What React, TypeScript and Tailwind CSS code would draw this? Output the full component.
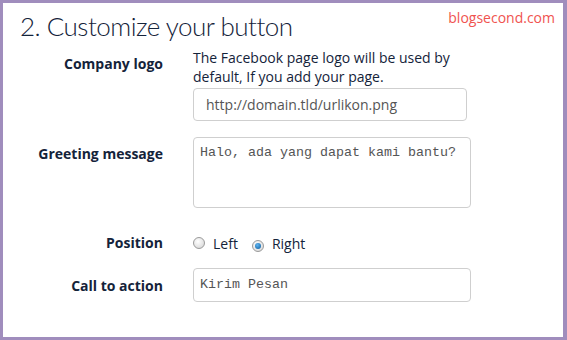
import React from "react";

const Radio = ({ checked }: { checked?: boolean }) => (
  <span className="inline-flex items-center justify-center w-[12px] h-[12px] rounded-full border border-[#9a9a9a] bg-[radial-gradient(circle_at_40%_35%,#ffffff,#d2d2d2)]">
    {checked && (
      <span className="block w-[6px] h-[6px] rounded-full bg-[radial-gradient(circle_at_40%_35%,#5fb4f0,#0a5a9c)]" />
    )}
  </span>
);

export default function App() {
  return (
    <div
      className="w-[567px] h-[340px] bg-white border-t-[3px] border-l-[3px] border-r-[4px] border-b-[3px] border-[#a08dbd] relative text-[#14233a]"
      style={{ fontFamily: "'Open Sans', Lato, sans-serif" }}
    >
      <div
        className="absolute right-[8px] top-[4px] text-[14px] text-[#f0534f]"
        style={{ fontFamily: "'Open Sans', 'Noto Sans', sans-serif" }}
      >
        blogsecond.com
      </div>
      <h1
        className="pl-[17px] pt-[7px] text-[26px] font-light leading-[32px] tracking-[-0.5px]"
        style={{ fontFamily: "Lato, sans-serif" }}
      >
        2. Customize your button
      </h1>

      <div className="grid grid-cols-[160px_1fr] gap-x-[30px]">
        {/* Company logo */}
        <div className="text-right font-bold text-[14px] pt-[12px] leading-[20px]">Company logo</div>
        <div>
          <div className="text-[14px] leading-[19px] pt-[6px]">
            The Facebook page logo will be used by
            <br />
            default, If you add your page.
          </div>
          <div className="mt-[2px] w-[274px] h-[33px] border border-[#cfcfcf] rounded-[4px] flex items-center pl-[12px] text-[14px] text-[#555]">
            http://domain.tld/urlikon.png
          </div>
        </div>

        {/* Greeting */}
        <div className="text-right font-bold text-[14px] pt-[7px] mt-[16px] leading-[20px]">Greeting message</div>
        <div className="mt-[16px]">
          <div
            className="w-[278px] h-[71px] border border-[#cfcfcf] rounded-[4px] pl-[6px] pt-[5px] text-[13.33px] text-[#555]"
            style={{ fontFamily: "'Liberation Mono', monospace" }}
          >
            Halo, ada yang dapat kami bantu?
          </div>
        </div>

        {/* Position */}
        <div className="text-right font-bold text-[14px] mt-[26px] leading-[18px]">Position</div>
        <div className="mt-[26px] flex items-center h-[18px] text-[14px]">
          <Radio />
          <span className="ml-[8px]">Left</span>
          <span className="ml-[14px]">
            <Radio checked />
          </span>
          <span className="ml-[8px]">Right</span>
        </div>

        {/* Call to action */}
        <div className="text-right font-bold text-[14px] mt-[16px] h-[34px] flex items-center justify-end">Call to action</div>
        <div className="mt-[16px]">
          <div
            className="w-[278px] h-[34px] border border-[#cfcfcf] rounded-[4px] pl-[6px] flex items-center text-[13.33px] text-[#555]"
            style={{ fontFamily: "'Liberation Mono', monospace" }}
          >
            Kirim Pesan
          </div>
        </div>
      </div>
    </div>
  );
}
